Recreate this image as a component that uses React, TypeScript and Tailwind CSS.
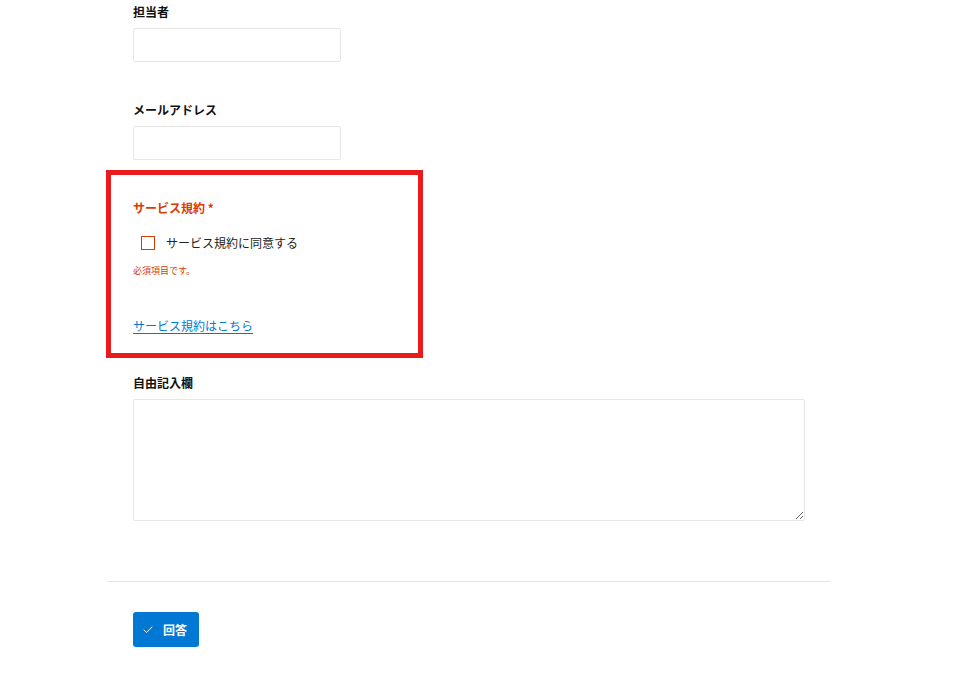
import { Check } from 'lucide-react';

const font = { fontFamily: '"Noto Sans CJK JP", "Noto Sans", sans-serif' };

function Field({ label, className }: { label: string; className?: string }) {
  return (
    <div className={className}>
      <div className="text-[12px] leading-[18px] font-bold text-[#111]">{label}</div>
      <input
        type="text"
        className="mt-[7px] block h-[34px] w-[208px] rounded-[2px] border border-[#e6e6e6] bg-white px-2 text-[13px] outline-none"
      />
    </div>
  );
}

export default function App() {
  return (
    <div className="min-h-[679px] w-full bg-white" style={font}>
      <div className="ml-[108px] w-[722px]">
        <div className="px-[25px] pt-[3px]">
          <Field label="担当者" />
          <Field label="メールアドレス" className="mt-[39px]" />
        </div>

        {/* Terms section (highlighted) */}
        <div className="mt-[10px] -ml-[2px] h-[188px] w-[317px] border-[5px] border-[#e81c1c] pl-[22px] pt-[24px]">
          <div className="text-[12px] leading-[18px] font-bold text-[#d83b01]">サービス規約 *</div>
          <label className="mt-[17px] flex items-center">
            <span className="ml-[8px] block h-[14px] w-[14px] border border-[#d83b01] bg-white" />
            <span className="ml-[11px] text-[12px] leading-[18px] text-[#222]">サービス規約に同意する</span>
          </label>
          <div className="mt-[13px] text-[9px] leading-[12px] text-[#d83b01]">必須項目です。</div>
          <a
            href="#"
            className="mt-[40px] inline-block text-[12px] leading-[18px] text-[#0078d4] underline underline-offset-2"
          >
            サービス規約はこちら
          </a>
        </div>

        <div className="px-[25px] pt-[16px]">
          <div className="text-[12px] leading-[18px] font-bold text-[#111]">自由記入欄</div>
          <textarea className="mt-[7px] block h-[122px] w-[672px] rounded-[2px] border border-[#e6e6e6] bg-white p-2 text-[13px] outline-none" />
        </div>

        <div className="mt-[60px] h-px w-full bg-[#e6e6e6]" />

        <div className="px-[25px] pt-[30px]">
          <button className="flex h-[35px] w-[66px] items-center rounded-[3px] bg-[#0078d4] pl-[9px] text-white">
            <Check className="h-[12px] w-[12px]" strokeWidth={2} />
            <span className="ml-[9px] text-[12px] font-bold leading-none">回答</span>
          </button>
        </div>
      </div>
    </div>
  );
}
